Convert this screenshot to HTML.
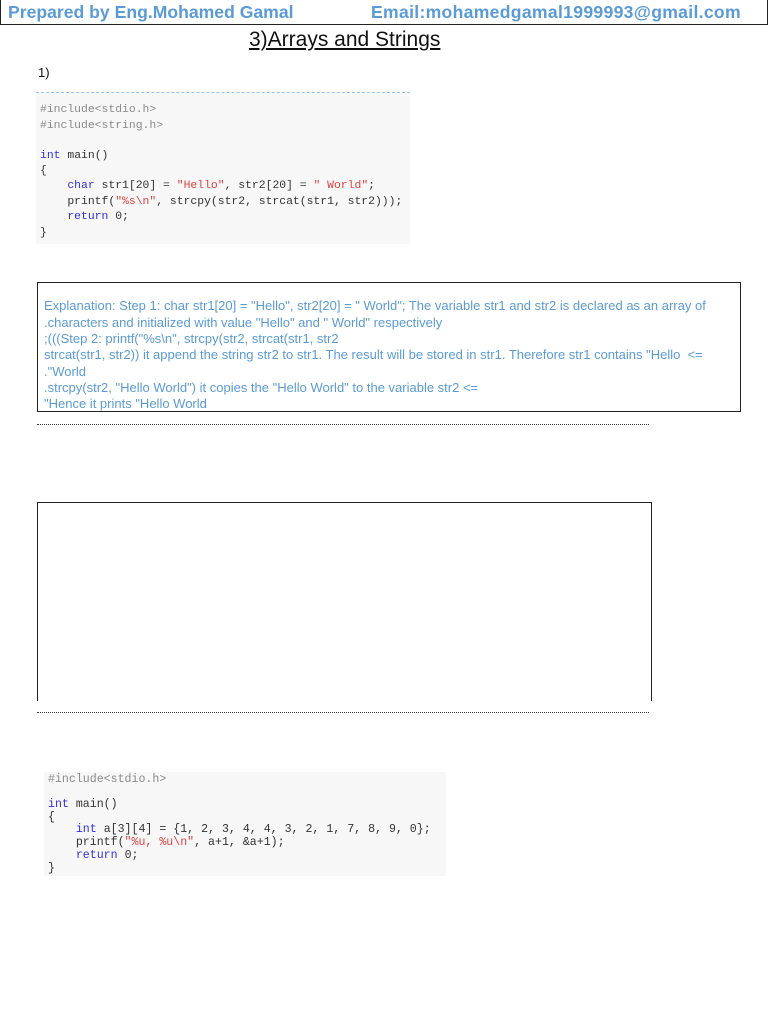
<!DOCTYPE html>
<html><head><meta charset="utf-8"><style>
body{margin:0;width:768px;height:1024px;background:#fff;position:relative;overflow:hidden;font-family:"Liberation Sans",sans-serif}
.a{position:absolute;white-space:pre}
.hd{color:#5b9bd5;font-weight:bold;font-size:17.6px;top:2px}
.code{position:absolute;background:#f7f7f7;font-family:"Liberation Mono",monospace}
.code div{position:absolute;white-space:pre;left:4px}
.g{color:#8a8a8a}.b{color:#3030e0}.r{color:#e04040}.k{color:#333}
.ex{position:absolute;left:37px;top:282px;width:702px;height:128px;border:1px solid #222}
.ex div{position:absolute;left:6px;white-space:pre;color:#5b9bd5;font-size:13px;letter-spacing:0}
.dot{position:absolute;left:37px;width:612px;border-top:1px dotted #333}
</style></head><body>
<div style="position:absolute;left:0;top:0;width:766px;height:24px;border:1px solid #222;border-top:none"></div>
<div class="a hd" style="left:8px">Prepared by Eng.Mohamed Gamal</div>
<div class="a hd" style="left:371px;letter-spacing:0.3px">Email:mohamedgamal1999993@gmail.com</div>
<div class="a" style="left:249px;top:28px;font-size:21px;text-decoration:underline;color:#111">3)Arrays and Strings</div>
<div class="a" style="left:38px;top:65px;font-size:13px;color:#111">1)</div>

<div class="code" style="left:36px;top:92px;width:374px;height:151px;border-top:1px dashed #9cc3e6;font-size:11.4px">
<div class="g" style="top:11px">#include&lt;stdio.h&gt;</div>
<div class="g" style="top:27px">#include&lt;string.h&gt;</div>
<div style="top:57px"><span class="b">int</span> <span class="k">main()</span></div>
<div class="k" style="top:72px">{</div>
<div style="top:87px">    <span class="b">char</span> <span class="k">str1[20] =</span> <span class="r">"Hello"</span><span class="k">, str2[20] =</span> <span class="r">" World"</span><span class="k">;</span></div>
<div style="top:103px">    <span class="k">printf(</span><span class="r">"%s\n"</span><span class="k">, strcpy(str2, strcat(str1, str2)));</span></div>
<div style="top:118px">    <span class="b">return</span> <span class="k">0;</span></div>
<div class="k" style="top:134px">}</div>
</div>

<div class="ex">
<div style="top:15px">Explanation: Step 1: char str1[20] = "Hello", str2[20] = " World"; The variable str1 and str2 is declared as an array of</div>
<div style="top:32px">.characters and initialized with value "Hello" and " World" respectively</div>
<div style="top:48px">;(((Step 2: printf("%s\n", strcpy(str2, strcat(str1, str2</div>
<div style="top:64px">strcat(str1, str2)) it append the string str2 to str1. The result will be stored in str1. Therefore str1 contains "Hello  &lt;=</div>
<div style="top:81px">."World</div>
<div style="top:97px">.strcpy(str2, "Hello World") it copies the "Hello World" to the variable str2 &lt;=</div>
<div style="top:113px">"Hence it prints "Hello World</div>
</div>
<div class="dot" style="top:424px"></div>

<div style="position:absolute;left:37px;top:502px;width:613px;height:198px;border:1px solid #222;border-bottom:none"></div>
<div class="dot" style="top:712px"></div>

<div class="code" style="left:44px;top:772px;width:402px;height:104px;font-size:11.6px">
<div class="g" style="top:1px">#include&lt;stdio.h&gt;</div>
<div style="top:26px"><span class="b">int</span> <span class="k">main()</span></div>
<div class="k" style="top:39px">{</div>
<div style="top:51px">    <span class="b">int</span> <span class="k">a[3][4] = {1, 2, 3, 4, 4, 3, 2, 1, 7, 8, 9, 0};</span></div>
<div style="top:64px">    <span class="k">printf(</span><span class="r">"%u, %u\n"</span><span class="k">, a+1, &amp;a+1);</span></div>
<div style="top:77px">    <span class="b">return</span> <span class="k">0;</span></div>
<div class="k" style="top:90px">}</div>
</div>
</body></html>
